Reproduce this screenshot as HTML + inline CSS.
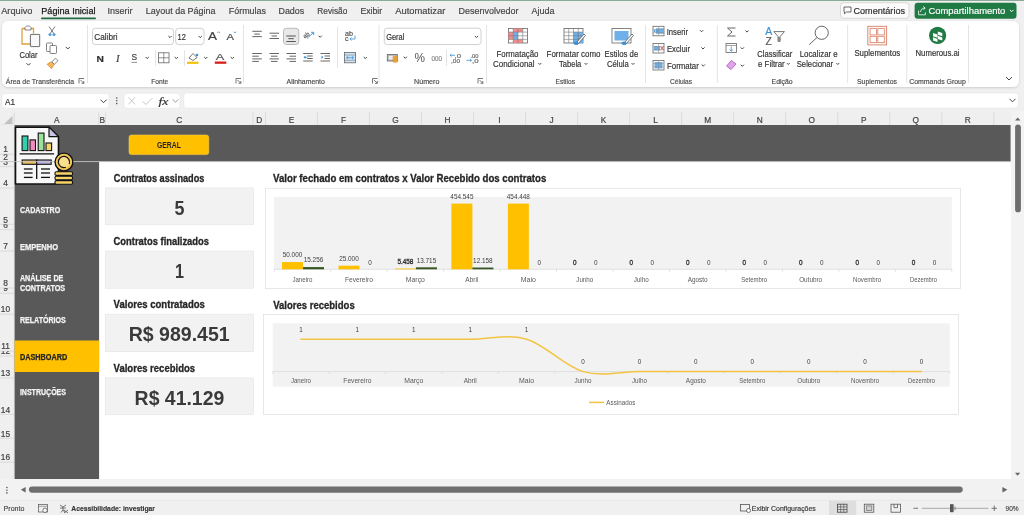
<!DOCTYPE html><html><head><meta charset="utf-8"><title>Excel Dashboard</title><style>html,body{margin:0;padding:0;width:1024px;height:515px;overflow:hidden;background:#f0f0f0}svg{display:block;will-change:transform;font-family:"Liberation Sans",sans-serif}</style></head><body>
<svg width="1024" height="515" viewBox="0 0 1024 515">
<defs><filter id="sh" x="-2%" y="-10%" width="104%" height="130%"><feDropShadow dx="0" dy="0.8" stdDeviation="0.8" flood-color="#000" flood-opacity="0.16"/></filter></defs>
<rect x="0.00" y="0.00" width="1024.00" height="515.00" fill="#f0f0f0"/>
<rect x="0.00" y="0.00" width="1024.00" height="1.00" fill="#8aab98"/>
<text x="1.20" y="14.30" font-size="9" fill="#454545" stroke="#454545" stroke-width="0.18" textLength="31.30" lengthAdjust="spacingAndGlyphs">Arquivo</text>
<text x="41.30" y="14.30" font-size="9" fill="#1a1a1a" textLength="54.20" lengthAdjust="spacingAndGlyphs" stroke="#1a1a1a" stroke-width="0.25">Página Inicial</text>
<text x="107.50" y="14.30" font-size="9" fill="#454545" stroke="#454545" stroke-width="0.18" textLength="25.00" lengthAdjust="spacingAndGlyphs">Inserir</text>
<text x="145.80" y="14.30" font-size="9" fill="#454545" stroke="#454545" stroke-width="0.18" textLength="69.70" lengthAdjust="spacingAndGlyphs">Layout da Página</text>
<text x="228.80" y="14.30" font-size="9" fill="#454545" stroke="#454545" stroke-width="0.18" textLength="37.20" lengthAdjust="spacingAndGlyphs">Fórmulas</text>
<text x="278.50" y="14.30" font-size="9" fill="#454545" stroke="#454545" stroke-width="0.18" textLength="25.70" lengthAdjust="spacingAndGlyphs">Dados</text>
<text x="317.30" y="14.30" font-size="9" fill="#454545" stroke="#454545" stroke-width="0.18" textLength="30.00" lengthAdjust="spacingAndGlyphs">Revisão</text>
<text x="360.50" y="14.30" font-size="9" fill="#454545" stroke="#454545" stroke-width="0.18" textLength="21.70" lengthAdjust="spacingAndGlyphs">Exibir</text>
<text x="395.30" y="14.30" font-size="9" fill="#454545" stroke="#454545" stroke-width="0.18" textLength="50.00" lengthAdjust="spacingAndGlyphs">Automatizar</text>
<text x="458.50" y="14.30" font-size="9" fill="#454545" stroke="#454545" stroke-width="0.18" textLength="60.00" lengthAdjust="spacingAndGlyphs">Desenvolvedor</text>
<text x="531.50" y="14.30" font-size="9" fill="#454545" stroke="#454545" stroke-width="0.18" textLength="23.00" lengthAdjust="spacingAndGlyphs">Ajuda</text>
<rect x="41.00" y="17.60" width="55.00" height="1.60" fill="#1f6e43" rx="0.8"/>
<rect x="840.50" y="2.70" width="68.50" height="15.60" fill="#fbfbfb" stroke="#cfcfcf" stroke-width="0.8" rx="3"/>
<path d="M844,7 h7 v5 h-4.5 l-2,1.8 v-1.8 h-0.5 z" fill="none" stroke="#444" stroke-width="0.8"/>
<text x="853.50" y="14.00" font-size="9.5" fill="#2b2b2b" stroke="#2b2b2b" stroke-width="0.18" textLength="51.50" lengthAdjust="spacingAndGlyphs">Comentários</text>
<rect x="914.60" y="2.70" width="101.90" height="16.00" fill="#1f7a44" rx="3"/>
<path d="M918.6,10.5 v4.3 h6.8 v-2.5 M920.5,12 c0.3,-2.5 2,-4 4.5,-4 M923.3,6.5 l1.8,1.5 l-1.5,1.8" fill="none" stroke="#fff" stroke-width="0.8"/>
<text x="928.40" y="14.20" font-size="9.5" fill="#ffffff" stroke="#ffffff" stroke-width="0.18" textLength="76.90" lengthAdjust="spacingAndGlyphs">Compartilhamento</text>
<path d="M1009.80,9.90 L1011.60,11.70 L1013.40,9.90" fill="none" stroke="#fff" stroke-width="1.0"/>
<g filter="url(#sh)">
<rect x="2.00" y="21.00" width="1017.00" height="66.00" fill="#ffffff" rx="6"/>
</g>
<line x1="87.50" y1="25.00" x2="87.50" y2="83.00" stroke="#e1e1e1" stroke-width="0.9"/>
<line x1="243.50" y1="25.00" x2="243.50" y2="83.00" stroke="#e1e1e1" stroke-width="0.9"/>
<line x1="379.00" y1="25.00" x2="379.00" y2="83.00" stroke="#e1e1e1" stroke-width="0.9"/>
<line x1="486.50" y1="25.00" x2="486.50" y2="83.00" stroke="#e1e1e1" stroke-width="0.9"/>
<line x1="645.50" y1="25.00" x2="645.50" y2="83.00" stroke="#e1e1e1" stroke-width="0.9"/>
<line x1="717.30" y1="25.00" x2="717.30" y2="83.00" stroke="#e1e1e1" stroke-width="0.9"/>
<line x1="847.60" y1="25.00" x2="847.60" y2="83.00" stroke="#e1e1e1" stroke-width="0.9"/>
<line x1="906.80" y1="25.00" x2="906.80" y2="83.00" stroke="#e1e1e1" stroke-width="0.9"/>
<line x1="968.50" y1="25.00" x2="968.50" y2="83.00" stroke="#e1e1e1" stroke-width="0.9"/>
<line x1="155.50" y1="50.00" x2="155.50" y2="66.00" stroke="#e1e1e1" stroke-width="0.9"/>
<line x1="184.50" y1="50.00" x2="184.50" y2="66.00" stroke="#e1e1e1" stroke-width="0.9"/>
<line x1="337.50" y1="27.00" x2="337.50" y2="68.00" stroke="#e1e1e1" stroke-width="0.9"/>
<line x1="446.50" y1="50.00" x2="446.50" y2="66.00" stroke="#e1e1e1" stroke-width="0.9"/>
<text x="5.75" y="83.60" font-size="8" fill="#4a4a4a" stroke="#4a4a4a" stroke-width="0.18" textLength="68.30" lengthAdjust="spacingAndGlyphs">Área de Transferência</text>
<text x="151.30" y="83.60" font-size="8" fill="#4a4a4a" stroke="#4a4a4a" stroke-width="0.18" textLength="17.00" lengthAdjust="spacingAndGlyphs">Fonte</text>
<text x="286.55" y="83.60" font-size="8" fill="#4a4a4a" stroke="#4a4a4a" stroke-width="0.18" textLength="38.30" lengthAdjust="spacingAndGlyphs">Alinhamento</text>
<text x="414.05" y="83.60" font-size="8" fill="#4a4a4a" stroke="#4a4a4a" stroke-width="0.18" textLength="25.30" lengthAdjust="spacingAndGlyphs">Número</text>
<text x="555.60" y="83.60" font-size="8" fill="#4a4a4a" stroke="#4a4a4a" stroke-width="0.18" textLength="19.40" lengthAdjust="spacingAndGlyphs">Estilos</text>
<text x="670.00" y="83.60" font-size="8" fill="#4a4a4a" stroke="#4a4a4a" stroke-width="0.18" textLength="22.00" lengthAdjust="spacingAndGlyphs">Células</text>
<text x="771.60" y="83.60" font-size="8" fill="#4a4a4a" stroke="#4a4a4a" stroke-width="0.18" textLength="21.00" lengthAdjust="spacingAndGlyphs">Edição</text>
<text x="857.00" y="83.60" font-size="8" fill="#4a4a4a" stroke="#4a4a4a" stroke-width="0.18" textLength="40.00" lengthAdjust="spacingAndGlyphs">Suplementos</text>
<text x="909.20" y="83.60" font-size="8" fill="#4a4a4a" stroke="#4a4a4a" stroke-width="0.18" textLength="56.60" lengthAdjust="spacingAndGlyphs">Commands Group</text>
<path d="M79,83.5 v-5 h5" fill="none" stroke="#555" stroke-width="0.8"/>
<path d="M80.5,80.0 L83.8,83.3 M83.8,81.0 v2.3 h-2.3" fill="none" stroke="#555" stroke-width="0.8"/>
<path d="M236,83.5 v-5 h5" fill="none" stroke="#555" stroke-width="0.8"/>
<path d="M237.5,80.0 L240.8,83.3 M240.8,81.0 v2.3 h-2.3" fill="none" stroke="#555" stroke-width="0.8"/>
<path d="M372.5,83.5 v-5 h5" fill="none" stroke="#555" stroke-width="0.8"/>
<path d="M374.0,80.0 L377.3,83.3 M377.3,81.0 v2.3 h-2.3" fill="none" stroke="#555" stroke-width="0.8"/>
<path d="M478,83.5 v-5 h5" fill="none" stroke="#555" stroke-width="0.8"/>
<path d="M479.5,80.0 L482.8,83.3 M482.8,81.0 v2.3 h-2.3" fill="none" stroke="#555" stroke-width="0.8"/>
<path d="M1006.00,77.00 L1009.00,80.00 L1012.00,77.00" fill="none" stroke="#444" stroke-width="1.0"/>
<path d="M22,28.5 h3 M31,28.5 h2.5 v5" fill="none" stroke="#e0a040" stroke-width="1.3"/>
<path d="M22,28.5 v15.5 h8" fill="none" stroke="#e0a040" stroke-width="1.3"/>
<path d="M25,27.5 l1.5,-1.5 h3 l1.5,1.5 v2.5 h-6 z" fill="#fff" stroke="#6b6b6b" stroke-width="0.8"/>
<rect x="30.40" y="34.40" width="9.30" height="12.20" fill="#f8f8f8" stroke="#5e5e5e" stroke-width="0.9" rx="0.6"/>
<text x="19.40" y="57.80" font-size="9" fill="#333" stroke="#333" stroke-width="0.18" textLength="18.20" lengthAdjust="spacingAndGlyphs">Colar</text>
<path d="M26.50,63.20 L28.50,65.20 L30.50,63.20" fill="none" stroke="#444" stroke-width="1.0"/>
<path d="M49,26.5 L53.5,33 M55,26.5 L50.5,33" fill="none" stroke="#555" stroke-width="0.8"/>
<circle cx="50" cy="34.5" r="1.6" fill="#5a9fd4"/><circle cx="54" cy="34.5" r="1.6" fill="#5a9fd4"/>
<rect x="46.50" y="43.00" width="6.00" height="8.50" fill="#fff" stroke="#666" stroke-width="0.8" rx="0.8"/>
<rect x="50.00" y="45.50" width="6.50" height="8.00" fill="#fff" stroke="#666" stroke-width="0.8" rx="0.8"/>
<path d="M65.80,47.00 L67.80,49.00 L69.80,47.00" fill="none" stroke="#444" stroke-width="1.0"/>
<path d="M47,64.3 L51.3,61.6 L54.2,64.5 L51.5,68.8 Z" fill="#f2a43a" stroke="#d08020" stroke-width="0.5"/>
<line x1="48.70" y1="65.50" x2="52.00" y2="62.90" stroke="#fff" stroke-width="0.5"/>
<line x1="50.20" y1="67.00" x2="53.00" y2="64.20" stroke="#fff" stroke-width="0.5"/>
<path d="M51.8,61.8 L55.5,58.2 L58,60.7 L54.3,64.3 Z" fill="#fff" stroke="#666" stroke-width="0.8"/>
<rect x="92.50" y="28.30" width="81.00" height="16.30" fill="#ffffff" stroke="#c4c4c4" stroke-width="0.8" rx="3"/>
<text x="94.30" y="39.80" font-size="9" fill="#333" stroke="#333" stroke-width="0.18" textLength="23.30" lengthAdjust="spacingAndGlyphs">Calibri</text>
<path d="M168.40,36.00 L170.00,37.60 L171.60,36.00" fill="none" stroke="#444" stroke-width="1.0"/>
<rect x="175.70" y="28.30" width="28.30" height="16.30" fill="#ffffff" stroke="#c4c4c4" stroke-width="0.8" rx="3"/>
<text x="177.60" y="39.80" font-size="9" fill="#333" stroke="#333" stroke-width="0.18" textLength="8.30" lengthAdjust="spacingAndGlyphs">12</text>
<path d="M198.60,36.00 L200.20,37.60 L201.80,36.00" fill="none" stroke="#444" stroke-width="1.0"/>
<text x="208.00" y="40.00" font-size="11" fill="#444" stroke="#444" stroke-width="0.18" textLength="9.00" lengthAdjust="spacingAndGlyphs">A</text>
<path d="M217.3,33 l1.3,-1.3 l1.3,1.3" fill="none" stroke="#3c8fd0" stroke-width="0.8"/>
<text x="226.50" y="40.00" font-size="9.5" fill="#444" stroke="#444" stroke-width="0.18" textLength="7.50" lengthAdjust="spacingAndGlyphs">A</text>
<path d="M233.6,31.7 l1.3,1.3 l1.3,-1.3" fill="none" stroke="#3c8fd0" stroke-width="0.8"/>
<text x="96.60" y="61.50" font-size="9" fill="#333" stroke="#333" stroke-width="0.18" font-weight="bold" textLength="7.40" lengthAdjust="spacingAndGlyphs">N</text>
<text x="116.00" y="61.50" font-size="9.5" fill="#444" stroke="#444" stroke-width="0.18" font-style="italic" font-family='"Liberation Serif", serif' textLength="3.60" lengthAdjust="spacingAndGlyphs">I</text>
<text x="131.50" y="60.30" font-size="8.5" fill="#444" stroke="#444" stroke-width="0.18" textLength="5.60" lengthAdjust="spacingAndGlyphs">S</text>
<line x1="131.50" y1="62.40" x2="137.00" y2="62.40" stroke="#444" stroke-width="0.6"/>
<path d="M145.60,57.00 L147.20,58.60 L148.80,57.00" fill="none" stroke="#444" stroke-width="1.0"/>
<rect x="158.50" y="52.80" width="10.50" height="10.00" fill="none" stroke="#666" stroke-width="0.8"/>
<line x1="163.75" y1="52.80" x2="163.75" y2="62.80" stroke="#666" stroke-width="0.7"/>
<line x1="158.50" y1="57.80" x2="169.00" y2="57.80" stroke="#666" stroke-width="0.7"/>
<path d="M174.70,57.00 L176.30,58.60 L177.90,57.00" fill="none" stroke="#444" stroke-width="1.0"/>
<path d="M189,58 l4,-4.5 l4,4 l-4,3 z" fill="none" stroke="#555" stroke-width="0.8"/>
<circle cx="197" cy="55" r="1.3" fill="#3c8fd0"/>
<rect x="187.00" y="61.70" width="11.50" height="2.20" fill="#f4c20d"/>
<path d="M204.20,57.00 L205.80,58.60 L207.40,57.00" fill="none" stroke="#444" stroke-width="1.0"/>
<text x="215.80" y="60.20" font-size="8.5" fill="#555" stroke="#555" stroke-width="0.18" textLength="8.50" lengthAdjust="spacingAndGlyphs">A</text>
<rect x="214.80" y="61.50" width="11.50" height="2.30" fill="#d91e18"/>
<path d="M230.70,57.00 L232.30,58.60 L233.90,57.00" fill="none" stroke="#444" stroke-width="1.0"/>
<line x1="252.30" y1="31.30" x2="261.80" y2="31.30" stroke="#666" stroke-width="1"/>
<line x1="254.30" y1="34.10" x2="259.80" y2="34.10" stroke="#666" stroke-width="1"/>
<line x1="252.30" y1="36.60" x2="261.80" y2="36.60" stroke="#666" stroke-width="1"/>
<line x1="269.50" y1="33.20" x2="279.00" y2="33.20" stroke="#666" stroke-width="1"/>
<line x1="271.50" y1="36.00" x2="277.00" y2="36.00" stroke="#666" stroke-width="1"/>
<line x1="269.50" y1="38.50" x2="279.00" y2="38.50" stroke="#666" stroke-width="1"/>
<rect x="283.50" y="28.30" width="15.30" height="16.20" fill="#e8e8e8" stroke="#ababab" stroke-width="0.8" rx="3"/>
<line x1="286.30" y1="36.00" x2="295.80" y2="36.00" stroke="#555" stroke-width="1"/>
<line x1="288.30" y1="38.70" x2="293.80" y2="38.70" stroke="#555" stroke-width="1"/>
<line x1="286.30" y1="41.50" x2="295.80" y2="41.50" stroke="#555" stroke-width="1"/>
<text x="303.00" y="37.20" font-size="6" fill="#555" stroke="#555" stroke-width="0.18" textLength="6.50" lengthAdjust="spacingAndGlyphs" transform="rotate(-35 306 35)">ab</text>
<path d="M307,38.5 L313.5,32.5 M311,32.3 h2.7 v2.7" fill="none" stroke="#3c8fd0" stroke-width="0.9"/>
<path d="M318.60,35.70 L320.20,37.30 L321.80,35.70" fill="none" stroke="#444" stroke-width="1.0"/>
<line x1="252.30" y1="53.50" x2="261.80" y2="53.50" stroke="#666" stroke-width="1"/>
<line x1="252.30" y1="56.20" x2="258.80" y2="56.20" stroke="#666" stroke-width="1"/>
<line x1="252.30" y1="58.90" x2="261.80" y2="58.90" stroke="#666" stroke-width="1"/>
<line x1="252.30" y1="61.40" x2="258.80" y2="61.40" stroke="#666" stroke-width="1"/>
<line x1="269.50" y1="53.50" x2="279.00" y2="53.50" stroke="#666" stroke-width="1"/>
<line x1="271.00" y1="56.20" x2="277.50" y2="56.20" stroke="#666" stroke-width="1"/>
<line x1="269.50" y1="58.90" x2="279.00" y2="58.90" stroke="#666" stroke-width="1"/>
<line x1="271.00" y1="61.40" x2="277.50" y2="61.40" stroke="#666" stroke-width="1"/>
<line x1="286.50" y1="53.50" x2="296.00" y2="53.50" stroke="#666" stroke-width="1"/>
<line x1="289.50" y1="56.20" x2="296.00" y2="56.20" stroke="#666" stroke-width="1"/>
<line x1="286.50" y1="58.90" x2="296.00" y2="58.90" stroke="#666" stroke-width="1"/>
<line x1="289.50" y1="61.40" x2="296.00" y2="61.40" stroke="#666" stroke-width="1"/>
<line x1="303.20" y1="53.50" x2="312.70" y2="53.50" stroke="#666" stroke-width="1"/>
<line x1="307.20" y1="56.00" x2="312.70" y2="56.00" stroke="#666" stroke-width="1"/>
<line x1="307.20" y1="58.50" x2="312.70" y2="58.50" stroke="#666" stroke-width="1"/>
<line x1="303.20" y1="61.00" x2="312.70" y2="61.00" stroke="#666" stroke-width="1"/>
<path d="M303.5,57.3 l2,-1.7 v3.4 z" fill="#3c8fd0"/>
<line x1="304.50" y1="57.30" x2="307.50" y2="57.30" stroke="#3c8fd0" stroke-width="0.8"/>
<line x1="320.50" y1="53.50" x2="330.00" y2="53.50" stroke="#666" stroke-width="1"/>
<line x1="324.50" y1="56.00" x2="330.00" y2="56.00" stroke="#666" stroke-width="1"/>
<line x1="324.50" y1="58.50" x2="330.00" y2="58.50" stroke="#666" stroke-width="1"/>
<line x1="320.50" y1="61.00" x2="330.00" y2="61.00" stroke="#666" stroke-width="1"/>
<path d="M323.5,57.3 l-2,-1.7 v3.4 z" fill="#3c8fd0"/>
<text x="345.00" y="35.50" font-size="6.5" fill="#555" stroke="#555" stroke-width="0.18" textLength="8.00" lengthAdjust="spacingAndGlyphs">ab</text>
<text x="345.00" y="40.70" font-size="6.5" fill="#555" stroke="#555" stroke-width="0.18" textLength="3.50" lengthAdjust="spacingAndGlyphs">c</text>
<path d="M355,35.5 v3.5 h-5 M351.5,37.5 l-1.6,1.5 l1.6,1.5" fill="none" stroke="#3c8fd0" stroke-width="0.8"/>
<rect x="344.50" y="52.50" width="11.00" height="10.30" fill="#cfe3f5" stroke="#666" stroke-width="0.8"/>
<line x1="344.50" y1="55.00" x2="355.50" y2="55.00" stroke="#666" stroke-width="0.5"/>
<line x1="344.50" y1="60.30" x2="355.50" y2="60.30" stroke="#666" stroke-width="0.5"/>
<path d="M346.5,57.7 h7 M348,56.3 l-1.5,1.4 l1.5,1.4 M352,56.3 l1.5,1.4 l-1.5,1.4" fill="none" stroke="#3c8fd0" stroke-width="0.8"/>
<path d="M363.70,57.00 L365.30,58.60 L366.90,57.00" fill="none" stroke="#444" stroke-width="1.0"/>
<rect x="384.30" y="28.20" width="96.70" height="16.40" fill="#ffffff" stroke="#c4c4c4" stroke-width="0.8" rx="3"/>
<text x="386.20" y="39.80" font-size="9" fill="#333" stroke="#333" stroke-width="0.18" textLength="18.20" lengthAdjust="spacingAndGlyphs">Geral</text>
<path d="M474.90,36.00 L476.50,37.60 L478.10,36.00" fill="none" stroke="#444" stroke-width="1.0"/>
<rect x="387.30" y="54.50" width="10.00" height="6.50" fill="#bdbdbd" stroke="#666" stroke-width="0.8"/>
<rect x="388.80" y="56.00" width="7.00" height="3.50" fill="#ececec"/>
<ellipse cx="395.3" cy="57.2" rx="2.6" ry="1.2" fill="#f2a93b" stroke="#d08020" stroke-width="0.4"/>
<ellipse cx="395.3" cy="59.2" rx="2.6" ry="1.2" fill="#f2a93b" stroke="#d08020" stroke-width="0.4"/>
<ellipse cx="395.3" cy="61.2" rx="2.6" ry="1.2" fill="#f2a93b" stroke="#d08020" stroke-width="0.4"/>
<path d="M403.70,56.70 L405.30,58.30 L406.90,56.70" fill="none" stroke="#444" stroke-width="1.0"/>
<text x="414.50" y="62.20" font-size="12" fill="#555" textLength="10.50" lengthAdjust="spacingAndGlyphs">%</text>
<text x="431.50" y="60.50" font-size="7.5" fill="#888" stroke="#888" stroke-width="0.18" textLength="10.50" lengthAdjust="spacingAndGlyphs">000</text>
<text x="454.50" y="57.50" font-size="6" fill="#666" stroke="#666" stroke-width="0.18" textLength="6.50" lengthAdjust="spacingAndGlyphs">,0</text>
<text x="451.00" y="62.50" font-size="6" fill="#666" stroke="#666" stroke-width="0.18" textLength="9.00" lengthAdjust="spacingAndGlyphs">,00</text>
<path d="M450,55.3 h5 M451.5,54 l-1.5,1.3 l1.5,1.3" fill="none" stroke="#3c8fd0" stroke-width="0.8"/>
<text x="470.50" y="57.50" font-size="6" fill="#666" stroke="#666" stroke-width="0.18" textLength="8.00" lengthAdjust="spacingAndGlyphs">.00</text>
<text x="472.00" y="62.50" font-size="6" fill="#666" stroke="#666" stroke-width="0.18" textLength="6.50" lengthAdjust="spacingAndGlyphs">,0</text>
<path d="M466.5,60.3 h5 M470,59 l1.5,1.3 l-1.5,1.3" fill="none" stroke="#3c8fd0" stroke-width="0.8"/>
<rect x="508.50" y="28.50" width="19.00" height="14.50" fill="#ffffff" stroke="#666" stroke-width="0.8"/>
<rect x="513.25" y="28.50" width="9.50" height="3.60" fill="#f28b8b"/>
<rect x="513.25" y="39.40" width="9.50" height="3.60" fill="#f28b8b"/>
<rect x="508.50" y="32.10" width="4.75" height="7.30" fill="#f28b8b"/>
<rect x="513.25" y="32.10" width="4.75" height="7.30" fill="#6fb0e8"/>
<line x1="513.25" y1="28.50" x2="513.25" y2="43.00" stroke="#777" stroke-width="0.6"/>
<line x1="518.00" y1="28.50" x2="518.00" y2="43.00" stroke="#777" stroke-width="0.6"/>
<line x1="522.75" y1="28.50" x2="522.75" y2="43.00" stroke="#777" stroke-width="0.6"/>
<line x1="508.50" y1="32.12" x2="527.50" y2="32.12" stroke="#777" stroke-width="0.6"/>
<line x1="508.50" y1="35.75" x2="527.50" y2="35.75" stroke="#777" stroke-width="0.6"/>
<line x1="508.50" y1="39.38" x2="527.50" y2="39.38" stroke="#777" stroke-width="0.6"/>
<text x="496.55" y="56.60" font-size="9" fill="#333" stroke="#333" stroke-width="0.18" textLength="41.90" lengthAdjust="spacingAndGlyphs">Formatação</text>
<text x="493.00" y="66.80" font-size="9" fill="#333" stroke="#333" stroke-width="0.18" textLength="41.50" lengthAdjust="spacingAndGlyphs">Condicional</text>
<path d="M538.40,63.10 L539.80,64.50 L541.20,63.10" fill="none" stroke="#444" stroke-width="1.0"/>
<rect x="564.00" y="28.50" width="19.00" height="14.50" fill="#ffffff" stroke="#666" stroke-width="0.8"/>
<rect x="573.50" y="32.10" width="9.50" height="10.90" fill="#6fb0e8"/>
<line x1="568.75" y1="28.50" x2="568.75" y2="43.00" stroke="#777" stroke-width="0.6"/>
<line x1="573.50" y1="28.50" x2="573.50" y2="43.00" stroke="#777" stroke-width="0.6"/>
<line x1="578.25" y1="28.50" x2="578.25" y2="43.00" stroke="#777" stroke-width="0.6"/>
<line x1="564.00" y1="32.12" x2="583.00" y2="32.12" stroke="#777" stroke-width="0.6"/>
<line x1="564.00" y1="35.75" x2="583.00" y2="35.75" stroke="#777" stroke-width="0.6"/>
<line x1="564.00" y1="39.38" x2="583.00" y2="39.38" stroke="#777" stroke-width="0.6"/>
<path d="M576,43 l8,-9 l1.5,1.5 l-8,9 z" fill="#fff" stroke="#555" stroke-width="0.8"/>
<ellipse cx="576" cy="43.3" rx="2.5" ry="1.8" fill="#3c8fd0"/>
<text x="546.55" y="56.60" font-size="9" fill="#333" stroke="#333" stroke-width="0.18" textLength="53.90" lengthAdjust="spacingAndGlyphs">Formatar como</text>
<text x="559.00" y="66.80" font-size="9" fill="#333" stroke="#333" stroke-width="0.18" textLength="22.30" lengthAdjust="spacingAndGlyphs">Tabela</text>
<path d="M584.60,63.10 L586.00,64.50 L587.40,63.10" fill="none" stroke="#444" stroke-width="1.0"/>
<rect x="612.00" y="28.50" width="19.00" height="14.50" fill="#ffffff" stroke="#666" stroke-width="0.8"/>
<rect x="614.50" y="31.00" width="14.00" height="9.50" fill="#6fb0e8"/>
<path d="M624,43 l8,-9 l1.5,1.5 l-8,9 z" fill="#fff" stroke="#555" stroke-width="0.8"/>
<ellipse cx="624" cy="43.3" rx="2.5" ry="1.8" fill="#3c8fd0"/>
<text x="604.60" y="56.60" font-size="9" fill="#333" stroke="#333" stroke-width="0.18" textLength="33.60" lengthAdjust="spacingAndGlyphs">Estilos de</text>
<text x="607.00" y="66.80" font-size="9" fill="#333" stroke="#333" stroke-width="0.18" textLength="21.70" lengthAdjust="spacingAndGlyphs">Célula</text>
<path d="M631.60,63.10 L633.00,64.50 L634.40,63.10" fill="none" stroke="#444" stroke-width="1.0"/>
<rect x="653.00" y="26.30" width="11.00" height="9.50" fill="#ffffff" stroke="#666" stroke-width="0.8"/>
<rect x="656.00" y="28.30" width="8.00" height="5.50" fill="#6fb0e8"/>
<path d="M654,31.0 h4 M655.3,29.7 l-1.3,1.3 l1.3,1.3" fill="none" stroke="#3c8fd0" stroke-width="0.8"/>
<line x1="653.00" y1="29.50" x2="664.00" y2="29.50" stroke="#888" stroke-width="0.5"/>
<line x1="653.00" y1="32.60" x2="664.00" y2="32.60" stroke="#888" stroke-width="0.5"/>
<line x1="658.50" y1="26.30" x2="658.50" y2="35.80" stroke="#888" stroke-width="0.5"/>
<text x="666.70" y="34.70" font-size="9" fill="#333" stroke="#333" stroke-width="0.18" textLength="21.30" lengthAdjust="spacingAndGlyphs">Inserir</text>
<path d="M700.00,30.20 L701.60,31.80 L703.20,30.20" fill="none" stroke="#444" stroke-width="1.0"/>
<rect x="653.00" y="43.50" width="11.00" height="9.50" fill="#ffffff" stroke="#666" stroke-width="0.8"/>
<rect x="654.00" y="46.00" width="6.00" height="4.50" fill="#6fb0e8"/>
<path d="M660.5,46.5 l3,3.5 M663.5,46.5 l-3,3.5" fill="none" stroke="#d33" stroke-width="0.8"/>
<line x1="653.00" y1="46.70" x2="664.00" y2="46.70" stroke="#888" stroke-width="0.5"/>
<line x1="653.00" y1="49.80" x2="664.00" y2="49.80" stroke="#888" stroke-width="0.5"/>
<line x1="658.50" y1="43.50" x2="658.50" y2="53.00" stroke="#888" stroke-width="0.5"/>
<text x="667.00" y="51.80" font-size="9" fill="#333" stroke="#333" stroke-width="0.18" textLength="23.00" lengthAdjust="spacingAndGlyphs">Excluir</text>
<path d="M701.40,47.40 L703.00,49.00 L704.60,47.40" fill="none" stroke="#444" stroke-width="1.0"/>
<rect x="653.00" y="60.50" width="11.00" height="9.50" fill="#ffffff" stroke="#666" stroke-width="0.8"/>
<rect x="654.50" y="62.00" width="8.00" height="6.50" fill="#6fb0e8"/>
<line x1="653.00" y1="63.70" x2="664.00" y2="63.70" stroke="#888" stroke-width="0.5"/>
<line x1="653.00" y1="66.80" x2="664.00" y2="66.80" stroke="#888" stroke-width="0.5"/>
<line x1="658.50" y1="60.50" x2="658.50" y2="70.00" stroke="#888" stroke-width="0.5"/>
<text x="667.00" y="68.80" font-size="9" fill="#333" stroke="#333" stroke-width="0.18" textLength="31.80" lengthAdjust="spacingAndGlyphs">Formatar</text>
<path d="M701.70,64.50 L703.30,66.10 L704.90,64.50" fill="none" stroke="#444" stroke-width="1.0"/>
<path d="M735.5,28 h-8 l4.5,4 l-4.5,4 h8" fill="none" stroke="#555" stroke-width="0.9"/>
<path d="M745.40,30.50 L747.00,32.10 L748.60,30.50" fill="none" stroke="#444" stroke-width="1.0"/>
<rect x="726.00" y="43.50" width="10.50" height="9.00" fill="#ffffff" stroke="#666" stroke-width="0.8"/>
<line x1="726.00" y1="45.50" x2="736.50" y2="45.50" stroke="#666" stroke-width="0.6"/>
<path d="M731.25,46.5 v4.5 M729.5,49.5 l1.75,1.7 l1.75,-1.7" fill="none" stroke="#3c8fd0" stroke-width="0.8"/>
<path d="M740.70,47.40 L742.30,49.00 L743.90,47.40" fill="none" stroke="#444" stroke-width="1.0"/>
<path d="M726.5,66 l5,-5.5 l4.5,3.5 l-5,5.5 z" fill="#e0a5e8" stroke="#b04fc0" stroke-width="0.8"/>
<path d="M740.70,64.70 L742.30,66.30 L743.90,64.70" fill="none" stroke="#444" stroke-width="1.0"/>
<text x="765.30" y="35.10" font-size="11.5" fill="#3c8fd0" stroke="#3c8fd0" stroke-width="0.18" textLength="7.00" lengthAdjust="spacingAndGlyphs">A</text>
<text x="765.50" y="44.50" font-size="11.5" fill="#555" stroke="#555" stroke-width="0.18" textLength="6.30" lengthAdjust="spacingAndGlyphs">Z</text>
<path d="M773.8,31.6 h10.6 l-4.3,5 v4.8 h-2 v-4.8 z" fill="none" stroke="#666" stroke-width="0.9" stroke-linejoin="round"/>
<rect x="777.90" y="37.00" width="2.20" height="4.60" fill="#888"/>
<text x="757.30" y="56.80" font-size="9" fill="#333" stroke="#333" stroke-width="0.18" textLength="34.90" lengthAdjust="spacingAndGlyphs">Classificar</text>
<text x="758.00" y="66.80" font-size="9" fill="#333" stroke="#333" stroke-width="0.18" textLength="26.70" lengthAdjust="spacingAndGlyphs">e Filtrar</text>
<path d="M786.90,63.10 L788.30,64.50 L789.70,63.10" fill="none" stroke="#444" stroke-width="1.0"/>
<circle cx="821.7" cy="32.8" r="6.6" fill="none" stroke="#555" stroke-width="0.9"/>
<line x1="816.90" y1="37.60" x2="809.30" y2="44.60" stroke="#555" stroke-width="0.9"/>
<text x="799.70" y="56.80" font-size="9" fill="#333" stroke="#333" stroke-width="0.18" textLength="38.00" lengthAdjust="spacingAndGlyphs">Localizar e</text>
<text x="796.70" y="66.80" font-size="9" fill="#333" stroke="#333" stroke-width="0.18" textLength="36.50" lengthAdjust="spacingAndGlyphs">Selecionar</text>
<path d="M836.40,63.10 L837.80,64.50 L839.20,63.10" fill="none" stroke="#444" stroke-width="1.0"/>
<rect x="867.80" y="26.30" width="18.80" height="18.60" fill="#fff4ef" stroke="#d9826a" stroke-width="0.9"/>
<rect x="870.10" y="28.60" width="6.50" height="6.30" fill="#ffffff" stroke="#d9826a" stroke-width="0.8"/>
<rect x="877.80" y="28.60" width="6.50" height="6.30" fill="#ffffff" stroke="#d9826a" stroke-width="0.8"/>
<rect x="870.10" y="36.30" width="6.50" height="6.30" fill="#ffffff" stroke="#d9826a" stroke-width="0.8"/>
<rect x="877.80" y="36.30" width="6.50" height="6.30" fill="#ffffff" stroke="#d9826a" stroke-width="0.8"/>
<text x="854.40" y="56.30" font-size="9" fill="#333" stroke="#333" stroke-width="0.18" textLength="45.80" lengthAdjust="spacingAndGlyphs">Suplementos</text>
<circle cx="937.6" cy="35.4" r="8.6" fill="#1f7a44"/>
<path d="M933,33 l4.5,1.6 v3.2 l-4.5,-1.6 z" fill="#ffffff"/>
<path d="M933,37.3 l4.5,1.6 v3.2 l-4.5,-1.6 z" fill="#ffffff"/>
<path d="M937.8,31.5 l4.5,1.6 v3.2 l-4.5,-1.6 z" fill="#ffffff"/>
<path d="M937.8,35.8 l4.5,1.6 v3.2 l-4.5,-1.6 z" fill="#ffffff"/>
<text x="915.50" y="56.30" font-size="9" fill="#333" stroke="#333" stroke-width="0.18" textLength="44.00" lengthAdjust="spacingAndGlyphs">Numerous.ai</text>
<rect x="2.00" y="93.50" width="107.00" height="14.80" fill="#ffffff" stroke="#e6e6e6" stroke-width="0.6" rx="3"/>
<text x="5.00" y="105.00" font-size="9" fill="#333" stroke="#333" stroke-width="0.18" textLength="10.00" lengthAdjust="spacingAndGlyphs">A1</text>
<path d="M100.50,99.70 L103.50,102.70 L106.50,99.70" fill="none" stroke="#444" stroke-width="1.0"/>
<circle cx="116.7" cy="98" r="0.8" fill="#555"/>
<circle cx="116.7" cy="100.8" r="0.8" fill="#555"/>
<circle cx="116.7" cy="103.6" r="0.8" fill="#555"/>
<rect x="124.00" y="93.20" width="56.00" height="15.10" fill="#ffffff" stroke="#e6e6e6" stroke-width="0.6" rx="3"/>
<path d="M128.5,97.3 l6.5,7 M135,97.3 l-6.5,7" fill="none" stroke="#bbb" stroke-width="0.8"/>
<path d="M142.5,101.5 l3.5,3 l6.5,-6.5" fill="none" stroke="#bbb" stroke-width="0.8"/>
<text x="158.50" y="104.80" font-size="10.5" fill="#333" stroke="#333" stroke-width="0.18" font-style="italic" font-family='"Liberation Serif", serif' textLength="10.00" lengthAdjust="spacingAndGlyphs">fx</text>
<path d="M172.70,99.40 L175.50,102.20 L178.30,99.40" fill="none" stroke="#999" stroke-width="1.0"/>
<rect x="183.70" y="93.00" width="834.60" height="15.10" fill="#ffffff" stroke="#e6e6e6" stroke-width="0.6" rx="3"/>
<path d="M1009.50,98.80 L1012.50,101.80 L1015.50,98.80" fill="none" stroke="#444" stroke-width="1.0"/>
<rect x="0.00" y="111.00" width="1011.00" height="14.00" fill="#efefef"/>
<path d="M4.1,123.9 L12.5,115.8 L12.5,123.9 z" fill="#c2c2c2"/>
<line x1="0.00" y1="125.10" x2="14.50" y2="125.10" stroke="#d4d4d4" stroke-width="0.8"/>
<line x1="98.80" y1="112.50" x2="98.80" y2="125.00" stroke="#d6d6d6" stroke-width="0.8"/>
<text x="56.70" y="123.00" font-size="8.3" fill="#444" stroke="#444" stroke-width="0.2" text-anchor="middle">A</text>
<line x1="105.50" y1="112.50" x2="105.50" y2="125.00" stroke="#d6d6d6" stroke-width="0.8"/>
<text x="102.15" y="123.00" font-size="8.3" fill="#444" stroke="#444" stroke-width="0.2" text-anchor="middle">B</text>
<line x1="253.00" y1="112.50" x2="253.00" y2="125.00" stroke="#d6d6d6" stroke-width="0.8"/>
<text x="179.25" y="123.00" font-size="8.3" fill="#444" stroke="#444" stroke-width="0.2" text-anchor="middle">C</text>
<line x1="265.50" y1="112.50" x2="265.50" y2="125.00" stroke="#d6d6d6" stroke-width="0.8"/>
<text x="259.25" y="123.00" font-size="8.3" fill="#444" stroke="#444" stroke-width="0.2" text-anchor="middle">D</text>
<line x1="317.43" y1="112.50" x2="317.43" y2="125.00" stroke="#d6d6d6" stroke-width="0.8"/>
<text x="291.41" y="123.00" font-size="8.3" fill="#444" stroke="#444" stroke-width="0.2" text-anchor="middle">E</text>
<line x1="369.46" y1="112.50" x2="369.46" y2="125.00" stroke="#d6d6d6" stroke-width="0.8"/>
<text x="343.44" y="123.00" font-size="8.3" fill="#444" stroke="#444" stroke-width="0.2" text-anchor="middle">F</text>
<line x1="421.49" y1="112.50" x2="421.49" y2="125.00" stroke="#d6d6d6" stroke-width="0.8"/>
<text x="395.47" y="123.00" font-size="8.3" fill="#444" stroke="#444" stroke-width="0.2" text-anchor="middle">G</text>
<line x1="473.52" y1="112.50" x2="473.52" y2="125.00" stroke="#d6d6d6" stroke-width="0.8"/>
<text x="447.50" y="123.00" font-size="8.3" fill="#444" stroke="#444" stroke-width="0.2" text-anchor="middle">H</text>
<line x1="525.55" y1="112.50" x2="525.55" y2="125.00" stroke="#d6d6d6" stroke-width="0.8"/>
<text x="499.53" y="123.00" font-size="8.3" fill="#444" stroke="#444" stroke-width="0.2" text-anchor="middle">I</text>
<line x1="577.58" y1="112.50" x2="577.58" y2="125.00" stroke="#d6d6d6" stroke-width="0.8"/>
<text x="551.56" y="123.00" font-size="8.3" fill="#444" stroke="#444" stroke-width="0.2" text-anchor="middle">J</text>
<line x1="629.61" y1="112.50" x2="629.61" y2="125.00" stroke="#d6d6d6" stroke-width="0.8"/>
<text x="603.59" y="123.00" font-size="8.3" fill="#444" stroke="#444" stroke-width="0.2" text-anchor="middle">K</text>
<line x1="681.64" y1="112.50" x2="681.64" y2="125.00" stroke="#d6d6d6" stroke-width="0.8"/>
<text x="655.62" y="123.00" font-size="8.3" fill="#444" stroke="#444" stroke-width="0.2" text-anchor="middle">L</text>
<line x1="733.67" y1="112.50" x2="733.67" y2="125.00" stroke="#d6d6d6" stroke-width="0.8"/>
<text x="707.65" y="123.00" font-size="8.3" fill="#444" stroke="#444" stroke-width="0.2" text-anchor="middle">M</text>
<line x1="785.70" y1="112.50" x2="785.70" y2="125.00" stroke="#d6d6d6" stroke-width="0.8"/>
<text x="759.68" y="123.00" font-size="8.3" fill="#444" stroke="#444" stroke-width="0.2" text-anchor="middle">N</text>
<line x1="837.73" y1="112.50" x2="837.73" y2="125.00" stroke="#d6d6d6" stroke-width="0.8"/>
<text x="811.71" y="123.00" font-size="8.3" fill="#444" stroke="#444" stroke-width="0.2" text-anchor="middle">O</text>
<line x1="889.76" y1="112.50" x2="889.76" y2="125.00" stroke="#d6d6d6" stroke-width="0.8"/>
<text x="863.74" y="123.00" font-size="8.3" fill="#444" stroke="#444" stroke-width="0.2" text-anchor="middle">P</text>
<line x1="941.79" y1="112.50" x2="941.79" y2="125.00" stroke="#d6d6d6" stroke-width="0.8"/>
<text x="915.77" y="123.00" font-size="8.3" fill="#444" stroke="#444" stroke-width="0.2" text-anchor="middle">Q</text>
<line x1="993.82" y1="112.50" x2="993.82" y2="125.00" stroke="#d6d6d6" stroke-width="0.8"/>
<text x="967.80" y="123.00" font-size="8.3" fill="#444" stroke="#444" stroke-width="0.2" text-anchor="middle">R</text>
<line x1="14.30" y1="112.50" x2="14.30" y2="125.00" stroke="#d6d6d6" stroke-width="0.8"/>
<rect x="0.00" y="125.00" width="14.50" height="354.00" fill="#efefef"/>
<line x1="14.30" y1="125.00" x2="14.30" y2="479.00" stroke="#d6d6d6" stroke-width="0.8"/>
<g>
<clipPath id="rc0"><rect x="0" y="125.00" width="14.3" height="29.20"/></clipPath>
<line x1="0.00" y1="154.20" x2="14.30" y2="154.20" stroke="#d4d4d4" stroke-width="0.8"/>
<g clip-path="url(#rc0)">
<text x="5.50" y="152.40" font-size="8.4" fill="#444" stroke="#444" stroke-width="0.2" text-anchor="middle">1</text>
</g>
<clipPath id="rc1"><rect x="0" y="154.20" width="14.3" height="7.40"/></clipPath>
<line x1="0.00" y1="161.60" x2="14.30" y2="161.60" stroke="#d4d4d4" stroke-width="0.8"/>
<g clip-path="url(#rc1)">
<text x="5.50" y="159.80" font-size="8.4" fill="#444" stroke="#444" stroke-width="0.2" text-anchor="middle">2</text>
</g>
<clipPath id="rc2"><rect x="0" y="161.60" width="14.3" height="5.00"/></clipPath>
<line x1="0.00" y1="166.60" x2="14.30" y2="166.60" stroke="#d4d4d4" stroke-width="0.8"/>
<g clip-path="url(#rc2)">
<text x="5.50" y="164.80" font-size="8.4" fill="#444" stroke="#444" stroke-width="0.2" text-anchor="middle">3</text>
</g>
<clipPath id="rc3"><rect x="0" y="166.60" width="14.3" height="21.40"/></clipPath>
<line x1="0.00" y1="188.00" x2="14.30" y2="188.00" stroke="#d4d4d4" stroke-width="0.8"/>
<g clip-path="url(#rc3)">
<text x="5.50" y="186.20" font-size="8.4" fill="#444" stroke="#444" stroke-width="0.2" text-anchor="middle">4</text>
</g>
<clipPath id="rc4"><rect x="0" y="188.00" width="14.3" height="36.30"/></clipPath>
<line x1="0.00" y1="224.30" x2="14.30" y2="224.30" stroke="#d4d4d4" stroke-width="0.8"/>
<g clip-path="url(#rc4)">
<text x="5.50" y="222.50" font-size="8.4" fill="#444" stroke="#444" stroke-width="0.2" text-anchor="middle">5</text>
</g>
<clipPath id="rc5"><rect x="0" y="224.30" width="14.3" height="5.40"/></clipPath>
<line x1="0.00" y1="229.70" x2="14.30" y2="229.70" stroke="#d4d4d4" stroke-width="0.8"/>
<g clip-path="url(#rc5)">
<text x="5.50" y="227.90" font-size="8.4" fill="#444" stroke="#444" stroke-width="0.2" text-anchor="middle">6</text>
</g>
<clipPath id="rc6"><rect x="0" y="229.70" width="14.3" height="21.30"/></clipPath>
<line x1="0.00" y1="251.00" x2="14.30" y2="251.00" stroke="#d4d4d4" stroke-width="0.8"/>
<g clip-path="url(#rc6)">
<text x="5.50" y="249.20" font-size="8.4" fill="#444" stroke="#444" stroke-width="0.2" text-anchor="middle">7</text>
</g>
<clipPath id="rc7"><rect x="0" y="251.00" width="14.3" height="37.00"/></clipPath>
<line x1="0.00" y1="288.00" x2="14.30" y2="288.00" stroke="#d4d4d4" stroke-width="0.8"/>
<g clip-path="url(#rc7)">
<text x="5.50" y="286.20" font-size="8.4" fill="#444" stroke="#444" stroke-width="0.2" text-anchor="middle">8</text>
</g>
<clipPath id="rc8"><rect x="0" y="288.00" width="14.3" height="5.20"/></clipPath>
<line x1="0.00" y1="293.20" x2="14.30" y2="293.20" stroke="#d4d4d4" stroke-width="0.8"/>
<g clip-path="url(#rc8)">
<text x="5.50" y="291.40" font-size="8.4" fill="#444" stroke="#444" stroke-width="0.2" text-anchor="middle">9</text>
</g>
<clipPath id="rc9"><rect x="0" y="293.20" width="14.3" height="21.00"/></clipPath>
<line x1="0.00" y1="314.20" x2="14.30" y2="314.20" stroke="#d4d4d4" stroke-width="0.8"/>
<g clip-path="url(#rc9)">
<text x="5.50" y="312.40" font-size="8.4" fill="#444" stroke="#444" stroke-width="0.2" text-anchor="middle">10</text>
</g>
<clipPath id="rc10"><rect x="0" y="314.20" width="14.3" height="37.00"/></clipPath>
<line x1="0.00" y1="351.20" x2="14.30" y2="351.20" stroke="#d4d4d4" stroke-width="0.8"/>
<g clip-path="url(#rc10)">
<text x="5.50" y="349.40" font-size="8.4" fill="#444" stroke="#444" stroke-width="0.2" text-anchor="middle">11</text>
</g>
<clipPath id="rc11"><rect x="0" y="351.20" width="14.3" height="4.90"/></clipPath>
<line x1="0.00" y1="356.10" x2="14.30" y2="356.10" stroke="#d4d4d4" stroke-width="0.8"/>
<g clip-path="url(#rc11)">
<text x="5.50" y="354.30" font-size="8.4" fill="#444" stroke="#444" stroke-width="0.2" text-anchor="middle">12</text>
</g>
<clipPath id="rc12"><rect x="0" y="356.10" width="14.3" height="21.90"/></clipPath>
<line x1="0.00" y1="378.00" x2="14.30" y2="378.00" stroke="#d4d4d4" stroke-width="0.8"/>
<g clip-path="url(#rc12)">
<text x="5.50" y="376.20" font-size="8.4" fill="#444" stroke="#444" stroke-width="0.2" text-anchor="middle">13</text>
</g>
<clipPath id="rc13"><rect x="0" y="378.00" width="14.3" height="36.40"/></clipPath>
<line x1="0.00" y1="414.40" x2="14.30" y2="414.40" stroke="#d4d4d4" stroke-width="0.8"/>
<g clip-path="url(#rc13)">
<text x="5.50" y="412.60" font-size="8.4" fill="#444" stroke="#444" stroke-width="0.2" text-anchor="middle">14</text>
</g>
<clipPath id="rc14"><rect x="0" y="414.40" width="14.3" height="23.90"/></clipPath>
<line x1="0.00" y1="438.30" x2="14.30" y2="438.30" stroke="#d4d4d4" stroke-width="0.8"/>
<g clip-path="url(#rc14)">
<text x="5.50" y="436.50" font-size="8.4" fill="#444" stroke="#444" stroke-width="0.2" text-anchor="middle">15</text>
</g>
<clipPath id="rc15"><rect x="0" y="438.30" width="14.3" height="23.90"/></clipPath>
<line x1="0.00" y1="462.20" x2="14.30" y2="462.20" stroke="#d4d4d4" stroke-width="0.8"/>
<g clip-path="url(#rc15)">
<text x="5.50" y="460.40" font-size="8.4" fill="#444" stroke="#444" stroke-width="0.2" text-anchor="middle">16</text>
</g>
<clipPath id="rc16"><rect x="0" y="462.20" width="14.3" height="24.80"/></clipPath>
<line x1="0.00" y1="487.00" x2="14.30" y2="487.00" stroke="#d4d4d4" stroke-width="0.8"/>
<g clip-path="url(#rc16)">
<text x="5.50" y="485.20" font-size="8.4" fill="#444" stroke="#444" stroke-width="0.2" text-anchor="middle">17</text>
</g>
</g>
<rect x="14.60" y="125.00" width="996.40" height="354.00" fill="#ffffff"/>
<rect x="14.60" y="125.00" width="996.00" height="36.60" fill="#595959"/>
<rect x="14.60" y="161.60" width="84.50" height="317.40" fill="#595959"/>
<rect x="14.60" y="340.50" width="84.50" height="31.50" fill="#ffc000"/>
<text x="19.90" y="213.00" font-size="8.2" fill="#f4f4f4" font-weight="bold" textLength="40.40" lengthAdjust="spacingAndGlyphs" stroke="#f4f4f4" stroke-width="0.25">CADASTRO</text>
<text x="19.90" y="250.00" font-size="8.2" fill="#f4f4f4" font-weight="bold" textLength="38.20" lengthAdjust="spacingAndGlyphs" stroke="#f4f4f4" stroke-width="0.25">EMPENHO</text>
<text x="19.90" y="281.00" font-size="8.2" fill="#f4f4f4" font-weight="bold" textLength="43.50" lengthAdjust="spacingAndGlyphs" stroke="#f4f4f4" stroke-width="0.25">ANÁLISE DE</text>
<text x="19.90" y="291.20" font-size="8.2" fill="#f4f4f4" font-weight="bold" textLength="45.30" lengthAdjust="spacingAndGlyphs" stroke="#f4f4f4" stroke-width="0.25">CONTRATOS</text>
<text x="19.90" y="323.30" font-size="8.2" fill="#f4f4f4" font-weight="bold" textLength="45.90" lengthAdjust="spacingAndGlyphs" stroke="#f4f4f4" stroke-width="0.25">RELATÓRIOS</text>
<text x="19.90" y="360.00" font-size="8.2" fill="#262626" font-weight="bold" textLength="47.40" lengthAdjust="spacingAndGlyphs" stroke="#262626" stroke-width="0.25">DASHBOARD</text>
<text x="19.90" y="394.50" font-size="8.2" fill="#f4f4f4" font-weight="bold" textLength="46.10" lengthAdjust="spacingAndGlyphs" stroke="#f4f4f4" stroke-width="0.25">INSTRUÇÕES</text>
<rect x="129.00" y="135.00" width="79.80" height="19.60" fill="#ffc000" stroke="#f2c94c" stroke-width="0.6" rx="2.5"/>
<text x="156.90" y="148.30" font-size="8.5" fill="#262626" font-weight="bold" textLength="24.00" lengthAdjust="spacingAndGlyphs">GERAL</text>
<line x1="0.00" y1="161.60" x2="1011.00" y2="161.60" stroke="#c4c4c4" stroke-width="0.8"/>
<text x="113.80" y="181.60" font-size="10.2" fill="#262626" stroke="#262626" stroke-width="0.3" font-weight="bold" textLength="90.60" lengthAdjust="spacingAndGlyphs">Contratos assinados</text>
<rect x="105.40" y="187.90" width="148.00" height="36.90" fill="#f2f2f2" stroke="#e3e3e3" stroke-width="0.6"/>
<text x="174.60" y="214.50" font-size="19.5" fill="#3a3a3a" font-weight="bold" textLength="10.00" lengthAdjust="spacingAndGlyphs">5</text>
<text x="113.60" y="244.80" font-size="10.2" fill="#262626" stroke="#262626" stroke-width="0.3" font-weight="bold" textLength="95.40" lengthAdjust="spacingAndGlyphs">Contratos finalizados</text>
<rect x="105.40" y="251.00" width="148.00" height="37.20" fill="#f2f2f2" stroke="#e3e3e3" stroke-width="0.6"/>
<text x="175.00" y="277.80" font-size="19.5" fill="#3a3a3a" font-weight="bold" textLength="9.00" lengthAdjust="spacingAndGlyphs">1</text>
<text x="113.60" y="308.40" font-size="10.2" fill="#262626" stroke="#262626" stroke-width="0.3" font-weight="bold" textLength="91.30" lengthAdjust="spacingAndGlyphs">Valores contratados</text>
<rect x="105.40" y="314.20" width="148.00" height="37.50" fill="#f2f2f2" stroke="#e3e3e3" stroke-width="0.6"/>
<text x="128.70" y="340.60" font-size="19.8" fill="#3a3a3a" font-weight="bold" textLength="101.00" lengthAdjust="spacingAndGlyphs">R$ 989.451</text>
<text x="113.60" y="372.00" font-size="10.2" fill="#262626" stroke="#262626" stroke-width="0.3" font-weight="bold" textLength="81.50" lengthAdjust="spacingAndGlyphs">Valores recebidos</text>
<rect x="105.40" y="377.90" width="148.00" height="36.90" fill="#f2f2f2" stroke="#e3e3e3" stroke-width="0.6"/>
<text x="134.60" y="404.50" font-size="19.8" fill="#3a3a3a" font-weight="bold" textLength="89.70" lengthAdjust="spacingAndGlyphs">R$ 41.129</text>
<text x="273.10" y="182.20" font-size="10.5" fill="#262626" stroke="#262626" stroke-width="0.3" font-weight="bold" textLength="273.20" lengthAdjust="spacingAndGlyphs">Valor fechado em contratos x Valor Recebido dos contratos</text>
<rect x="265.60" y="188.20" width="694.90" height="100.50" fill="#ffffff" stroke="#dcdcdc" stroke-width="0.7"/>
<rect x="274.00" y="197.00" width="677.80" height="72.30" fill="#f2f2f2"/>
<line x1="274.00" y1="269.30" x2="951.80" y2="269.30" stroke="#d9d9d9" stroke-width="0.8"/>
<line x1="274.20" y1="269.30" x2="274.20" y2="272.00" stroke="#d9d9d9" stroke-width="0.7"/>
<rect x="282.00" y="262.07" width="21.00" height="7.23" fill="#ffc000"/>
<rect x="303.00" y="267.09" width="21.00" height="2.21" fill="#375623"/>
<text x="282.73" y="257.27" font-size="7.8" fill="#404040" textLength="19.55" lengthAdjust="spacingAndGlyphs">50.000</text>
<text x="303.73" y="262.29" font-size="7.8" fill="#404040" textLength="19.55" lengthAdjust="spacingAndGlyphs">15.256</text>
<text x="292.43" y="281.70" font-size="7.6" fill="#595959" textLength="20.00" lengthAdjust="spacingAndGlyphs">Janeiro</text>
<line x1="330.67" y1="269.30" x2="330.67" y2="272.00" stroke="#d9d9d9" stroke-width="0.7"/>
<rect x="338.47" y="265.69" width="21.00" height="3.61" fill="#ffc000"/>
<text x="339.19" y="260.88" font-size="7.8" fill="#404040" textLength="19.55" lengthAdjust="spacingAndGlyphs">25.000</text>
<text x="368.19" y="264.50" font-size="7.8" fill="#404040" textLength="3.55" lengthAdjust="spacingAndGlyphs">0</text>
<text x="344.90" y="281.70" font-size="7.6" fill="#595959" textLength="28.00" lengthAdjust="spacingAndGlyphs">Fevereiro</text>
<line x1="387.13" y1="269.30" x2="387.13" y2="272.00" stroke="#d9d9d9" stroke-width="0.7"/>
<rect x="394.93" y="268.51" width="21.00" height="0.79" fill="#ffc000"/>
<rect x="415.93" y="267.32" width="21.00" height="1.98" fill="#375623"/>
<text x="397.43" y="263.71" font-size="7.8" fill="#303030" stroke="#303030" stroke-width="0.35" textLength="16.00" lengthAdjust="spacingAndGlyphs">5.458</text>
<text x="416.66" y="262.52" font-size="7.8" fill="#404040" textLength="19.55" lengthAdjust="spacingAndGlyphs">13.715</text>
<text x="405.87" y="281.70" font-size="7.6" fill="#595959" textLength="19.00" lengthAdjust="spacingAndGlyphs">Março</text>
<line x1="443.60" y1="269.30" x2="443.60" y2="272.00" stroke="#d9d9d9" stroke-width="0.7"/>
<rect x="451.40" y="203.57" width="21.00" height="65.73" fill="#ffc000"/>
<rect x="472.40" y="267.54" width="21.00" height="1.76" fill="#375623"/>
<text x="450.35" y="198.77" font-size="7.8" fill="#404040" textLength="23.10" lengthAdjust="spacingAndGlyphs">454.545</text>
<text x="473.12" y="262.74" font-size="7.8" fill="#404040" textLength="19.55" lengthAdjust="spacingAndGlyphs">12.158</text>
<text x="465.33" y="281.70" font-size="7.6" fill="#595959" textLength="13.00" lengthAdjust="spacingAndGlyphs">Abril</text>
<line x1="500.07" y1="269.30" x2="500.07" y2="272.00" stroke="#d9d9d9" stroke-width="0.7"/>
<rect x="507.87" y="203.59" width="21.00" height="65.71" fill="#ffc000"/>
<text x="506.82" y="198.79" font-size="7.8" fill="#404040" textLength="23.10" lengthAdjust="spacingAndGlyphs">454.448</text>
<text x="537.59" y="264.50" font-size="7.8" fill="#404040" textLength="3.55" lengthAdjust="spacingAndGlyphs">0</text>
<text x="520.80" y="281.70" font-size="7.6" fill="#595959" textLength="15.00" lengthAdjust="spacingAndGlyphs">Maio</text>
<line x1="556.53" y1="269.30" x2="556.53" y2="272.00" stroke="#d9d9d9" stroke-width="0.7"/>
<text x="573.06" y="264.50" font-size="7.8" fill="#303030" stroke="#303030" stroke-width="0.35" textLength="3.55" lengthAdjust="spacingAndGlyphs">0</text>
<text x="594.06" y="264.50" font-size="7.8" fill="#404040" textLength="3.55" lengthAdjust="spacingAndGlyphs">0</text>
<text x="576.27" y="281.70" font-size="7.6" fill="#595959" textLength="17.00" lengthAdjust="spacingAndGlyphs">Junho</text>
<line x1="613.00" y1="269.30" x2="613.00" y2="272.00" stroke="#d9d9d9" stroke-width="0.7"/>
<text x="629.52" y="264.50" font-size="7.8" fill="#303030" stroke="#303030" stroke-width="0.35" textLength="3.55" lengthAdjust="spacingAndGlyphs">0</text>
<text x="650.52" y="264.50" font-size="7.8" fill="#404040" textLength="3.55" lengthAdjust="spacingAndGlyphs">0</text>
<text x="633.73" y="281.70" font-size="7.6" fill="#595959" textLength="15.00" lengthAdjust="spacingAndGlyphs">Julho</text>
<line x1="669.47" y1="269.30" x2="669.47" y2="272.00" stroke="#d9d9d9" stroke-width="0.7"/>
<text x="685.99" y="264.50" font-size="7.8" fill="#303030" stroke="#303030" stroke-width="0.35" textLength="3.55" lengthAdjust="spacingAndGlyphs">0</text>
<text x="706.99" y="264.50" font-size="7.8" fill="#404040" textLength="3.55" lengthAdjust="spacingAndGlyphs">0</text>
<text x="687.70" y="281.70" font-size="7.6" fill="#595959" textLength="20.00" lengthAdjust="spacingAndGlyphs">Agosto</text>
<line x1="725.93" y1="269.30" x2="725.93" y2="272.00" stroke="#d9d9d9" stroke-width="0.7"/>
<text x="742.46" y="264.50" font-size="7.8" fill="#303030" stroke="#303030" stroke-width="0.35" textLength="3.55" lengthAdjust="spacingAndGlyphs">0</text>
<text x="763.46" y="264.50" font-size="7.8" fill="#404040" textLength="3.55" lengthAdjust="spacingAndGlyphs">0</text>
<text x="741.17" y="281.70" font-size="7.6" fill="#595959" textLength="26.00" lengthAdjust="spacingAndGlyphs">Setembro</text>
<line x1="782.40" y1="269.30" x2="782.40" y2="272.00" stroke="#d9d9d9" stroke-width="0.7"/>
<text x="798.92" y="264.50" font-size="7.8" fill="#303030" stroke="#303030" stroke-width="0.35" textLength="3.55" lengthAdjust="spacingAndGlyphs">0</text>
<text x="819.92" y="264.50" font-size="7.8" fill="#404040" textLength="3.55" lengthAdjust="spacingAndGlyphs">0</text>
<text x="799.13" y="281.70" font-size="7.6" fill="#595959" textLength="23.00" lengthAdjust="spacingAndGlyphs">Outubro</text>
<line x1="838.87" y1="269.30" x2="838.87" y2="272.00" stroke="#d9d9d9" stroke-width="0.7"/>
<text x="855.39" y="264.50" font-size="7.8" fill="#303030" stroke="#303030" stroke-width="0.35" textLength="3.55" lengthAdjust="spacingAndGlyphs">0</text>
<text x="876.39" y="264.50" font-size="7.8" fill="#404040" textLength="3.55" lengthAdjust="spacingAndGlyphs">0</text>
<text x="853.10" y="281.70" font-size="7.6" fill="#595959" textLength="28.00" lengthAdjust="spacingAndGlyphs">Novembro</text>
<line x1="895.33" y1="269.30" x2="895.33" y2="272.00" stroke="#d9d9d9" stroke-width="0.7"/>
<text x="911.86" y="264.50" font-size="7.8" fill="#303030" stroke="#303030" stroke-width="0.35" textLength="3.55" lengthAdjust="spacingAndGlyphs">0</text>
<text x="932.86" y="264.50" font-size="7.8" fill="#404040" textLength="3.55" lengthAdjust="spacingAndGlyphs">0</text>
<text x="910.07" y="281.70" font-size="7.6" fill="#595959" textLength="27.00" lengthAdjust="spacingAndGlyphs">Dezembro</text>
<line x1="951.80" y1="269.30" x2="951.80" y2="272.00" stroke="#d9d9d9" stroke-width="0.7"/>
<text x="273.20" y="309.00" font-size="10.5" fill="#262626" stroke="#262626" stroke-width="0.3" font-weight="bold" textLength="81.50" lengthAdjust="spacingAndGlyphs">Valores recebidos</text>
<rect x="263.30" y="314.50" width="695.20" height="100.00" fill="#ffffff" stroke="#dcdcdc" stroke-width="0.7"/>
<rect x="272.70" y="323.30" width="677.05" height="63.40" fill="#f2f2f2"/>
<line x1="272.70" y1="371.60" x2="949.75" y2="371.60" stroke="#d9d9d9" stroke-width="0.8"/>
<line x1="272.70" y1="371.60" x2="272.70" y2="374.00" stroke="#d9d9d9" stroke-width="0.7"/>
<line x1="329.12" y1="371.60" x2="329.12" y2="374.00" stroke="#d9d9d9" stroke-width="0.7"/>
<line x1="385.54" y1="371.60" x2="385.54" y2="374.00" stroke="#d9d9d9" stroke-width="0.7"/>
<line x1="441.96" y1="371.60" x2="441.96" y2="374.00" stroke="#d9d9d9" stroke-width="0.7"/>
<line x1="498.38" y1="371.60" x2="498.38" y2="374.00" stroke="#d9d9d9" stroke-width="0.7"/>
<line x1="554.80" y1="371.60" x2="554.80" y2="374.00" stroke="#d9d9d9" stroke-width="0.7"/>
<line x1="611.22" y1="371.60" x2="611.22" y2="374.00" stroke="#d9d9d9" stroke-width="0.7"/>
<line x1="667.65" y1="371.60" x2="667.65" y2="374.00" stroke="#d9d9d9" stroke-width="0.7"/>
<line x1="724.07" y1="371.60" x2="724.07" y2="374.00" stroke="#d9d9d9" stroke-width="0.7"/>
<line x1="780.49" y1="371.60" x2="780.49" y2="374.00" stroke="#d9d9d9" stroke-width="0.7"/>
<line x1="836.91" y1="371.60" x2="836.91" y2="374.00" stroke="#d9d9d9" stroke-width="0.7"/>
<line x1="893.33" y1="371.60" x2="893.33" y2="374.00" stroke="#d9d9d9" stroke-width="0.7"/>
<line x1="949.75" y1="371.60" x2="949.75" y2="374.00" stroke="#d9d9d9" stroke-width="0.7"/>
<path d="M300.91,339.20 C310.31,339.20 338.52,339.20 357.33,339.20 C376.14,339.20 394.95,339.20 413.75,339.20 C432.56,339.20 451.37,339.20 470.17,339.20 C488.98,339.20 507.79,333.80 526.59,339.20 C545.40,344.60 564.21,366.20 583.01,371.60 C601.82,377.00 620.63,371.60 639.44,371.60 C658.24,371.60 677.05,371.60 695.86,371.60 C714.66,371.60 733.47,371.60 752.28,371.60 C771.08,371.60 789.89,371.60 808.70,371.60 C827.50,371.60 846.31,371.60 865.12,371.60 C883.93,371.60 912.14,371.60 921.54,371.60" fill="none" stroke="#f3c443" stroke-width="1.5" stroke-linecap="round"/>
<text x="299.16" y="331.60" font-size="7.8" fill="#404040" textLength="3.50" lengthAdjust="spacingAndGlyphs">1</text>
<text x="290.91" y="383.00" font-size="7.6" fill="#595959" textLength="20.00" lengthAdjust="spacingAndGlyphs">Janeiro</text>
<text x="355.58" y="331.60" font-size="7.8" fill="#404040" textLength="3.50" lengthAdjust="spacingAndGlyphs">1</text>
<text x="343.33" y="383.00" font-size="7.6" fill="#595959" textLength="28.00" lengthAdjust="spacingAndGlyphs">Fevereiro</text>
<text x="412.00" y="331.60" font-size="7.8" fill="#404040" textLength="3.50" lengthAdjust="spacingAndGlyphs">1</text>
<text x="404.25" y="383.00" font-size="7.6" fill="#595959" textLength="19.00" lengthAdjust="spacingAndGlyphs">Março</text>
<text x="468.42" y="331.60" font-size="7.8" fill="#404040" textLength="3.50" lengthAdjust="spacingAndGlyphs">1</text>
<text x="463.67" y="383.00" font-size="7.6" fill="#595959" textLength="13.00" lengthAdjust="spacingAndGlyphs">Abril</text>
<text x="524.84" y="331.60" font-size="7.8" fill="#404040" textLength="3.50" lengthAdjust="spacingAndGlyphs">1</text>
<text x="519.09" y="383.00" font-size="7.6" fill="#595959" textLength="15.00" lengthAdjust="spacingAndGlyphs">Maio</text>
<text x="581.26" y="364.00" font-size="7.8" fill="#404040" textLength="3.50" lengthAdjust="spacingAndGlyphs">0</text>
<text x="574.51" y="383.00" font-size="7.6" fill="#595959" textLength="17.00" lengthAdjust="spacingAndGlyphs">Junho</text>
<text x="637.69" y="364.00" font-size="7.8" fill="#404040" textLength="3.50" lengthAdjust="spacingAndGlyphs">0</text>
<text x="631.94" y="383.00" font-size="7.6" fill="#595959" textLength="15.00" lengthAdjust="spacingAndGlyphs">Julho</text>
<text x="694.11" y="364.00" font-size="7.8" fill="#404040" textLength="3.50" lengthAdjust="spacingAndGlyphs">0</text>
<text x="685.86" y="383.00" font-size="7.6" fill="#595959" textLength="20.00" lengthAdjust="spacingAndGlyphs">Agosto</text>
<text x="750.53" y="364.00" font-size="7.8" fill="#404040" textLength="3.50" lengthAdjust="spacingAndGlyphs">0</text>
<text x="739.28" y="383.00" font-size="7.6" fill="#595959" textLength="26.00" lengthAdjust="spacingAndGlyphs">Setembro</text>
<text x="806.95" y="364.00" font-size="7.8" fill="#404040" textLength="3.50" lengthAdjust="spacingAndGlyphs">0</text>
<text x="797.20" y="383.00" font-size="7.6" fill="#595959" textLength="23.00" lengthAdjust="spacingAndGlyphs">Outubro</text>
<text x="863.37" y="364.00" font-size="7.8" fill="#404040" textLength="3.50" lengthAdjust="spacingAndGlyphs">0</text>
<text x="851.12" y="383.00" font-size="7.6" fill="#595959" textLength="28.00" lengthAdjust="spacingAndGlyphs">Novembro</text>
<text x="919.79" y="364.00" font-size="7.8" fill="#404040" textLength="3.50" lengthAdjust="spacingAndGlyphs">0</text>
<text x="908.04" y="383.00" font-size="7.6" fill="#595959" textLength="27.00" lengthAdjust="spacingAndGlyphs">Dezembro</text>
<line x1="589.00" y1="402.40" x2="604.20" y2="402.40" stroke="#f3c443" stroke-width="1.5"/>
<text x="606.30" y="405.00" font-size="7.6" fill="#595959" textLength="29.00" lengthAdjust="spacingAndGlyphs">Assinados</text>
<path d="M15.5,127.2 H49 L58.5,136.7 V184 H15.5 Z" fill="#f7f7f7" stroke="#111" stroke-width="1.6" stroke-linejoin="round"/>
<path d="M49,127.2 V136.7 H58.5 Z" fill="#c9c3e8" stroke="#111" stroke-width="1.2" stroke-linejoin="round"/>
<rect x="22.10" y="136.00" width="5.80" height="14.60" fill="#33d1b0" stroke="#111" stroke-width="1.1"/>
<rect x="30.00" y="139.90" width="5.50" height="10.70" fill="#f08bc0" stroke="#111" stroke-width="1.1"/>
<rect x="38.20" y="133.10" width="5.80" height="17.50" fill="#9be39b" stroke="#111" stroke-width="1.1"/>
<rect x="46.00" y="143.00" width="5.60" height="7.60" fill="#f7d36b" stroke="#111" stroke-width="1.1"/>
<line x1="19.60" y1="153.90" x2="54.10" y2="153.90" stroke="#111" stroke-width="1.3"/>
<rect x="22.10" y="160.00" width="14.60" height="4.30" fill="#e8c062" stroke="#111" stroke-width="1.1"/>
<rect x="36.70" y="160.00" width="14.50" height="4.30" fill="#b9b1e0" stroke="#111" stroke-width="1.1"/>
<line x1="36.70" y1="164.30" x2="36.70" y2="179.00" stroke="#111" stroke-width="1.3"/>
<line x1="23.90" y1="169.00" x2="32.60" y2="169.00" stroke="#111" stroke-width="1.3"/>
<line x1="41.00" y1="169.00" x2="50.00" y2="169.00" stroke="#111" stroke-width="1.3"/>
<line x1="23.90" y1="173.00" x2="32.60" y2="173.00" stroke="#111" stroke-width="1.3"/>
<line x1="41.00" y1="173.00" x2="50.00" y2="173.00" stroke="#111" stroke-width="1.3"/>
<line x1="23.90" y1="177.40" x2="32.60" y2="177.40" stroke="#111" stroke-width="1.3"/>
<line x1="41.00" y1="177.40" x2="50.00" y2="177.40" stroke="#111" stroke-width="1.3"/>
<rect x="55.00" y="171.80" width="17.50" height="3.60" fill="#f7d36b" stroke="#111" stroke-width="1.1" rx="1.2"/>
<rect x="55.00" y="176.20" width="17.50" height="3.60" fill="#f7d36b" stroke="#111" stroke-width="1.1" rx="1.2"/>
<rect x="55.00" y="180.60" width="17.50" height="3.60" fill="#f7d36b" stroke="#111" stroke-width="1.1" rx="1.2"/>
<line x1="14.60" y1="161.60" x2="75.00" y2="161.60" stroke="#c4c4c4" stroke-width="0.8"/>
<circle cx="63.95" cy="162" r="8.9" fill="#f3c65a" stroke="#111" stroke-width="1.4"/>
<circle cx="63.95" cy="162" r="5.6" fill="#f6e08c"/>
<path d="M65.87,167.26 A5.6,5.6 0 1 1 69.21,163.92" fill="none" stroke="#111" stroke-width="1.2"/>
<rect x="1011.00" y="111.00" width="13.00" height="368.00" fill="#f3f3f3"/>
<path d="M1015,120.5 l2.7,-3 l2.7,3 z" fill="#666"/>
<rect x="1015.10" y="124.40" width="5.80" height="87.90" fill="#6e6e6e" rx="2.9"/>
<path d="M1015,472.7 l2.6,3 l2.6,-3 z" fill="#666"/>
<rect x="0.00" y="479.00" width="1024.00" height="21.00" fill="#f2f2f2"/>
<circle cx="6.9" cy="487.5" r="0.8" fill="#555"/>
<circle cx="6.9" cy="490.2" r="0.8" fill="#555"/>
<circle cx="6.9" cy="492.9" r="0.8" fill="#555"/>
<path d="M25.6,487 v5.6 l-4.8,-2.8 z" fill="#666"/>
<rect x="28.90" y="486.40" width="933.85" height="6.30" fill="#6e6e6e" rx="3.1"/>
<path d="M1002.4,487 v5.4 l5,-2.7 z" fill="#666"/>
<rect x="0.00" y="500.00" width="1024.00" height="15.00" fill="#f0f0f0"/>
<line x1="0.00" y1="500.30" x2="1024.00" y2="500.30" stroke="#e2e2e2" stroke-width="0.6"/>
<text x="3.60" y="511.20" font-size="8" fill="#444" stroke="#444" stroke-width="0.15" textLength="20.80" lengthAdjust="spacingAndGlyphs">Pronto</text>
<rect x="38.50" y="504.50" width="9.00" height="7.50" fill="none" stroke="#666" stroke-width="0.8"/>
<line x1="38.50" y1="506.30" x2="47.50" y2="506.30" stroke="#666" stroke-width="0.6"/>
<circle cx="45" cy="510.3" r="2.2" fill="#fff" stroke="#555" stroke-width="0.8"/>
<path d="M60,505 l3,2 l3,-2 M63,507 v3 l-2,2.5 M63,510 l2,2.5 M60,508 h6" fill="none" stroke="#555" stroke-width="0.8"/>
<path d="M64,510 l4,3 M68,510 l-4,3" fill="none" stroke="#555" stroke-width="0.8"/>
<text x="71.30" y="510.80" font-size="8" fill="#333" stroke="#333" stroke-width="0.15" font-weight="bold" textLength="83.70" lengthAdjust="spacingAndGlyphs">Acessibilidade: investigar</text>
<rect x="740.50" y="504.50" width="9.00" height="6.50" fill="none" stroke="#555" stroke-width="0.8"/>
<circle cx="748.5" cy="510.5" r="2" fill="#fff" stroke="#555" stroke-width="0.8"/>
<text x="751.80" y="511.30" font-size="8" fill="#333" stroke="#333" stroke-width="0.15" textLength="64.00" lengthAdjust="spacingAndGlyphs">Exibir Configurações</text>
<rect x="829.00" y="500.60" width="27.20" height="14.40" fill="#dedede"/>
<rect x="837.50" y="504.20" width="9.50" height="8.00" fill="none" stroke="#444" stroke-width="0.8"/>
<line x1="840.70" y1="504.20" x2="840.70" y2="512.20" stroke="#444" stroke-width="0.6"/>
<line x1="843.80" y1="504.20" x2="843.80" y2="512.20" stroke="#444" stroke-width="0.6"/>
<line x1="837.50" y1="506.90" x2="847.00" y2="506.90" stroke="#444" stroke-width="0.6"/>
<line x1="837.50" y1="509.50" x2="847.00" y2="509.50" stroke="#444" stroke-width="0.6"/>
<rect x="864.30" y="504.20" width="9.50" height="8.00" fill="none" stroke="#555" stroke-width="0.8"/>
<rect x="866.20" y="505.90" width="5.70" height="4.60" fill="#d0d0d0" stroke="#555" stroke-width="0.6"/>
<rect x="891.00" y="504.20" width="9.50" height="8.00" fill="none" stroke="#555" stroke-width="0.8"/>
<path d="M894,504.2 v3.5 h3.5 v-3.5" fill="none" stroke="#555" stroke-width="0.8"/>
<line x1="913.40" y1="508.30" x2="918.00" y2="508.30" stroke="#555" stroke-width="0.8"/>
<line x1="921.80" y1="508.30" x2="988.40" y2="508.30" stroke="#888" stroke-width="0.7"/>
<rect x="950.00" y="504.20" width="3.60" height="8.00" fill="#555"/>
<line x1="955.00" y1="506.30" x2="955.00" y2="510.30" stroke="#555" stroke-width="0.6"/>
<path d="M991.5,508.3 h5.5 M994.25,505.5 v5.5" fill="none" stroke="#555" stroke-width="0.8"/>
<text x="1005.60" y="511.20" font-size="8" fill="#444" stroke="#444" stroke-width="0.15" textLength="13.10" lengthAdjust="spacingAndGlyphs">90%</text>
</svg></body></html>
